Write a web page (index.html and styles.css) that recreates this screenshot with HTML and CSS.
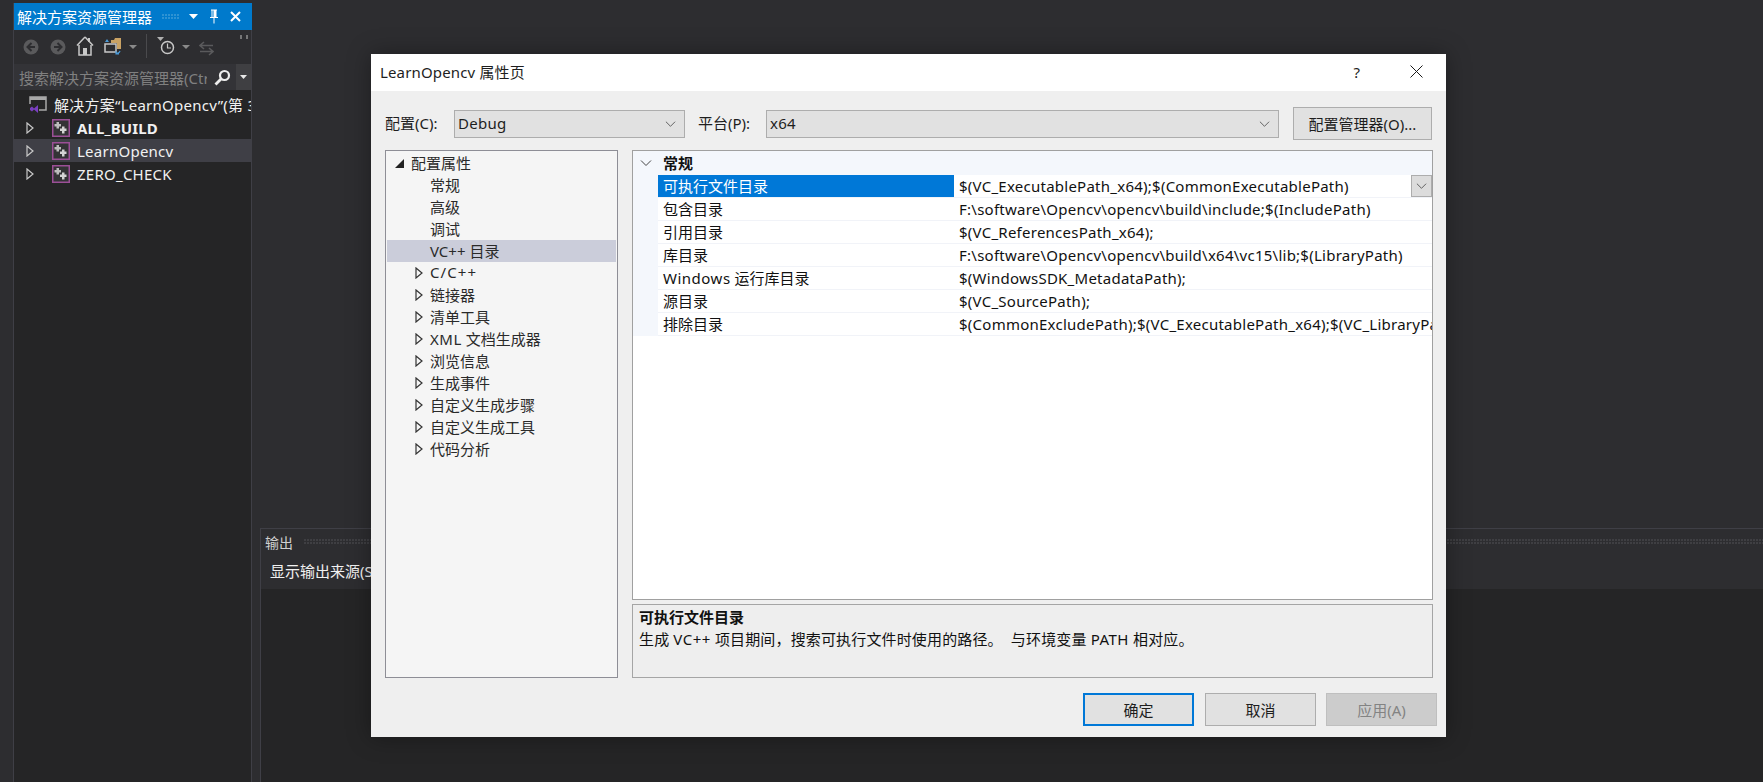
FILE: index.html
```html
<!DOCTYPE html>
<html lang="zh-CN">
<head>
<meta charset="utf-8">
<title>LearnOpencv 属性页</title>
<link rel="stylesheet" href="styles.css">
</head>
<body>
<svg class="defs" width="0" height="0">
  <defs>
    <symbol id="tri" viewBox="0 0 8 12"><path d="M1 1 L7 6 L1 11 Z" fill="none" stroke="currentColor" stroke-width="1.2"/></symbol>
    <symbol id="proj" viewBox="0 0 18 18">
      <rect x="0.75" y="0.75" width="16.5" height="16.5" fill="#333335" stroke="#9b4f96" stroke-width="1.5"/>
      <path d="M4.500 3h2.500v2h2v2.500H7v2H4.500v-2h-2V5h2z" fill="#bdbdbd"/>
      <path d="M10 7.500h2.500v2h2V12h-2v2.500H10V12H8V9.500h2z" fill="#d4d4d4"/>
    </symbol>
    <symbol id="chev" viewBox="0 0 12 8"><path d="M1 1.5 L6 6.5 L11 1.5" fill="none" stroke="currentColor" stroke-width="1"/></symbol>
  </defs>
</svg>
<div class="workspace">
  <aside class="side">
    <header class="side-title">
      <span class="side-title-text">解决方案资源管理器</span>
      <span class="grip grip-blue"></span>
      <svg class="tb-caret" width="9" height="5" viewBox="0 0 9 5"><path d="M0 0h9L4.500 5z" fill="#fff"/></svg>
      <svg class="tb-pin" width="10" height="15" viewBox="0 0 10 15"><path d="M2 0.500h6v1H7.500v6.500H9v1H5.500v5.500h-1V9H1V8h1.500V1.500H2z M3.500 1.500V8h1V1.500z" fill="#fff"/></svg>
      <svg class="tb-close" width="11" height="11" viewBox="0 0 11 11"><path d="M1 1L10 10M10 1L1 10" stroke="#fff" stroke-width="2"/></svg>
    </header>
    <div class="side-tools">
      <svg class="t-back" width="16" height="16" viewBox="0 0 16 16"><circle cx="8" cy="8" r="7.500" fill="#5a5a5c"/><path d="M8.500 4L4.500 8l4 4M5 8h7" fill="none" stroke="#2d2d30" stroke-width="2"/></svg>
      <svg class="t-fwd" width="16" height="16" viewBox="0 0 16 16"><circle cx="8" cy="8" r="7.500" fill="#5a5a5c"/><path d="M7.500 4l4 4-4 4M11 8H4" fill="none" stroke="#2d2d30" stroke-width="2"/></svg>
      <svg class="t-home" width="18" height="20" viewBox="0 0 18 20"><path d="M9 1L1 9.500M9 1l8 8.500" fill="none" stroke="#c8c8c8" stroke-width="1.500"/><path d="M3 9v10h12V9" fill="none" stroke="#c8c8c8" stroke-width="1.500"/><rect x="7" y="12" width="4" height="7" fill="#c8c8c8"/><rect x="12" y="2" width="2" height="4" fill="#c8c8c8"/></svg>
      <svg class="t-sync" width="18" height="18" viewBox="0 0 18 18"><path d="M7 3h3l1-2h6v11h-4V6H7z" fill="#c9a264"/><rect x="1" y="7" width="11" height="8" fill="none" stroke="#c8c8c8" stroke-width="1.500"/><path d="M1 5l2-3 2 3zM3 3h3" fill="#4a9ad8"/><path d="M12 16a3 3 0 0 0 4-2M12 14v3h3" fill="none" stroke="#4a9ad8" stroke-width="1.200"/></svg>
      <svg class="t-caret" width="8" height="4" viewBox="0 0 8 4"><path d="M0 0h8L4 4z" fill="#8a8a8a"/></svg>
      <span class="t-sep"></span>
      <svg class="t-hist" width="18" height="18" viewBox="0 0 18 18"><path d="M0 0h7L3.500 4z" fill="#b0b0b0"/><circle cx="10.500" cy="10.500" r="6" fill="none" stroke="#c8c8c8" stroke-width="1.500"/><path d="M10.500 6.500v4.500h3.500" fill="none" stroke="#c8c8c8" stroke-width="1.200"/></svg>
      <svg class="t-caret2" width="8" height="4" viewBox="0 0 8 4"><path d="M0 0h8L4 4z" fill="#8a8a8a"/></svg>
      <svg class="t-swap" width="15" height="15" viewBox="0 0 15 15"><path d="M5 1L1 4.500 5 8M1 4.500h13M10 7l4 3.500L10 14M14 10.500H1" fill="none" stroke="#5a5a5c" stroke-width="1.600"/></svg>
      <span class="t-more"></span>
    </div>
    <div class="side-search">
      <span class="search-text">搜索解决方案资源管理器(Ctrl+;)</span>
      <svg class="search-icon" width="17" height="17" viewBox="0 0 17 17"><circle cx="10.500" cy="6.500" r="4.500" fill="none" stroke="#eee" stroke-width="2.200"/><path d="M7 10L1.500 15.500" stroke="#eee" stroke-width="2.800"/></svg>
      <span class="search-drop"><svg width="7" height="4" viewBox="0 0 7 4"><path d="M0 0h7L3.500 4z" fill="#e8e8e8"/></svg></span>
    </div>
    <ul class="sol-tree">
      <li class="sol-row sol-root">
        <svg class="sol-icon" width="18" height="18" viewBox="0 0 18 18"><path d="M1 8V1h16v13h-7" fill="none" stroke="#a8a8a8" stroke-width="1.500"/><rect x="1" y="1" width="16" height="3" fill="#a8a8a8"/><path d="M1 12l2 -1.500 2 2 4-3.500v8l-4-3.500-2 2-2-1.500z" fill="#7a3fc0"/></svg>
        <span class="sol-label">解决方案“LearnOpencv”(第 3 个项目，共 3 个)</span>
      </li>
      <li class="sol-row"><svg class="sol-tri"><use href="#tri"/></svg><svg class="proj-icon"><use href="#proj"/></svg><span class="sol-label sol-bold">ALL_BUILD</span></li>
      <li class="sol-row sol-active"><svg class="sol-tri"><use href="#tri"/></svg><svg class="proj-icon"><use href="#proj"/></svg><span class="sol-label">LearnOpencv</span></li>
      <li class="sol-row"><svg class="sol-tri"><use href="#tri"/></svg><svg class="proj-icon"><use href="#proj"/></svg><span class="sol-label">ZERO_CHECK</span></li>
    </ul>
  </aside>
  <main class="main">
    <div class="editor"></div>
    <section class="output">
      <div class="out-title"><span>输出</span><span class="grip grip-dark"></span></div>
      <div class="out-tools">显示输出来源(S):</div>
      <div class="out-body"></div>
    </section>
  </main>
</div>

<div class="dialog">
  <header class="dlg-title">
    <span class="dlg-title-text">LearnOpencv 属性页</span>
    <span class="dlg-help">?</span>
    <svg class="dlg-close" width="13" height="13" viewBox="0 0 13 13"><path d="M0.500 0.500L12.500 12.500M12.500 0.500L0.500 12.500" stroke="#1a1a1a" stroke-width="1"/></svg>
  </header>
  <div class="dlg-body">
    <div class="cfg-row">
      <label class="cfg-label">配置(C):</label>
      <div class="combo combo-cfg"><span class="combo-text">Debug</span><svg class="chev"><use href="#chev"/></svg></div>
      <label class="cfg-label cfg-label2">平台(P):</label>
      <div class="combo combo-plat"><span class="combo-text">x64</span><svg class="chev"><use href="#chev"/></svg></div>
      <button class="btn btn-mgr">配置管理器(O)...</button>
    </div>
    <div class="panes">
      <nav class="tree">
        <div class="tree-row tree-root"><svg class="tree-open" width="9" height="9" viewBox="0 0 9 9"><path d="M9 0v9H0z" fill="#222"/></svg><span class="tree-text">配置属性</span></div>
        <div class="tree-row tree-child"><span class="tree-text">常规</span></div>
        <div class="tree-row tree-child"><span class="tree-text">高级</span></div>
        <div class="tree-row tree-child"><span class="tree-text">调试</span></div>
        <div class="tree-row tree-child tree-sel"><span class="tree-text">VC++ 目录</span></div>
        <div class="tree-row"><svg class="tree-tri"><use href="#tri"/></svg><span class="tree-text lat-wide">C/C++</span></div>
        <div class="tree-row"><svg class="tree-tri"><use href="#tri"/></svg><span class="tree-text">链接器</span></div>
        <div class="tree-row"><svg class="tree-tri"><use href="#tri"/></svg><span class="tree-text">清单工具</span></div>
        <div class="tree-row"><svg class="tree-tri"><use href="#tri"/></svg><span class="tree-text"><span class="lat">XML</span> 文档生成器</span></div>
        <div class="tree-row"><svg class="tree-tri"><use href="#tri"/></svg><span class="tree-text">浏览信息</span></div>
        <div class="tree-row"><svg class="tree-tri"><use href="#tri"/></svg><span class="tree-text">生成事件</span></div>
        <div class="tree-row"><svg class="tree-tri"><use href="#tri"/></svg><span class="tree-text">自定义生成步骤</span></div>
        <div class="tree-row"><svg class="tree-tri"><use href="#tri"/></svg><span class="tree-text">自定义生成工具</span></div>
        <div class="tree-row"><svg class="tree-tri"><use href="#tri"/></svg><span class="tree-text">代码分析</span></div>
      </nav>
      <div class="right">
        <div class="grid">
          <div class="grid-head"><svg class="head-chev"><use href="#chev"/></svg><span class="head-text">常规</span></div>
          <div class="grid-rows">
            <div class="prop prop-sel"><span class="prop-name">可执行文件目录</span><span class="prop-val">$(VC_ExecutablePath_x64);$(CommonExecutablePath)</span><span class="prop-drop"><svg class="chev"><use href="#chev"/></svg></span></div>
            <div class="prop"><span class="prop-name">包含目录</span><span class="prop-val">F:\software\Opencv\opencv\build\include;$(IncludePath)</span></div>
            <div class="prop"><span class="prop-name">引用目录</span><span class="prop-val">$(VC_ReferencesPath_x64);</span></div>
            <div class="prop"><span class="prop-name">库目录</span><span class="prop-val">F:\software\Opencv\opencv\build\x64\vc15\lib;$(LibraryPath)</span></div>
            <div class="prop"><span class="prop-name"><span class="lat">Windows</span> 运行库目录</span><span class="prop-val">$(WindowsSDK_MetadataPath);</span></div>
            <div class="prop"><span class="prop-name">源目录</span><span class="prop-val">$(VC_SourcePath);</span></div>
            <div class="prop"><span class="prop-name">排除目录</span><span class="prop-val">$(CommonExcludePath);$(VC_ExecutablePath_x64);$(VC_LibraryPath);$(VC_SourcePath)</span></div>
          </div>
        </div>
        <div class="desc">
          <div class="desc-title">可执行文件目录</div>
          <div class="desc-text">生成 <span class="lat">VC++</span> 项目期间，搜索可执行文件时使用的路径。&nbsp; 与环境变量 <span class="lat">PATH</span> 相对应。</div>
        </div>
      </div>
    </div>
    <div class="actions">
      <button class="btn btn-act btn-ok">确定</button>
      <button class="btn btn-act">取消</button>
      <button class="btn btn-act btn-off">应用(A)</button>
    </div>
  </div>
</div>
</body>
</html>
```
FILE: styles.css
```css
* { box-sizing: border-box; }
html, body { margin: 0; height: 100%; }
body {
  width: 1763px; height: 782px; overflow: hidden; position: relative;
  background: #2d2d30; color: #1e1e1e;
  font-family: "Noto Sans", "Noto Sans CJK SC", sans-serif; font-size: 15px;
}
.defs { position: absolute; }
.workspace { display: flex; height: 782px; padding: 3px 0 0 13px; }
.lat { letter-spacing: 0.5px; }
.lat-wide { letter-spacing: 1.1px; }

/* solution explorer */
.side { width: 239px; flex: none; display: flex; flex-direction: column; background: #252526; border-left: 1px solid #3f3f46; border-right: 1px solid #3f3f46; }
.side-title { height: 27px; flex: none; margin: 0 -1px 0 0; background: #007acc; color: #fff; display: flex; align-items: center; padding-left: 3px; line-height: 20px; position: relative; }
.side-title-text { width: 145px; white-space: nowrap; }
.grip { display: block; background-image: radial-gradient(circle at 1px 1px, currentColor 0.7px, transparent 0.9px); background-size: 3px 3px; }
.grip-blue { width: 17px; height: 6px; color: #2f94d4; }
.tb-caret { margin-left: 10px; }
.tb-pin { margin-left: 11px; }
.tb-close { margin-left: 11px; }
.side-tools { height: 34px; flex: none; background: #2d2d30; display: flex; align-items: center; position: relative; padding-left: 9px; }
.t-fwd { margin-left: 11px; }
.t-home { margin-left: 10px; margin-top: -3px; }
.t-sync { margin-left: 10px; margin-top: -3px; }
.t-caret { margin-left: 7px; }
.t-sep { width: 1px; height: 24px; background: #4a4a4d; margin-left: 9px; margin-top: -2px; }
.t-hist { margin-left: 10px; margin-top: -2px; }
.t-caret2 { margin-left: 7px; }
.t-swap { margin-left: 9px; margin-top: 2px; }
.t-more { position: absolute; right: 3px; top: 5px; width: 8px; height: 4px; background: linear-gradient(90deg, #777 0 2px, transparent 2px 6px, #777 6px 8px); }
.side-search { height: 26px; flex: none; background: #333337; display: flex; align-items: center; padding-left: 5px; position: relative; margin: 0; }
.search-text { width: 188px; overflow: hidden; white-space: nowrap; color: #808080; flex: none; }
.search-icon { margin-left: 7px; flex: none; }
.search-drop { position: absolute; right: 0; top: 0; bottom: 0; width: 15px; background: #3f3f42; display: flex; align-items: center; justify-content: center; }
.sol-tree { list-style: none; margin: 3px 0 0; padding: 0; color: #f1f1f1; }
.sol-row { height: 23px; display: flex; align-items: center; white-space: nowrap; overflow: hidden; padding-left: 12px; }
.sol-root { padding-left: 15px; }
.sol-active { background: #3f3f46; }
.sol-tri { width: 8px; height: 12px; color: #c8c8c8; flex: none; }
.proj-icon { width: 18px; height: 18px; margin-left: 18px; flex: none; }
.sol-icon { flex: none; }
.sol-label { margin-left: 7px; letter-spacing: 0.25px; }
.sol-bold { font-weight: 700; letter-spacing: 0.1px; }

/* main */
.main { flex: 1; min-width: 0; display: flex; flex-direction: column; padding-left: 8px; background: #2d2d30; }
.editor { height: 525px; flex: none; }
.output { flex: 1; display: flex; flex-direction: column; border-top: 1px solid #3f3f46; border-left: 1px solid #3f3f46; }
.out-title { height: 25px; flex: none; display: flex; align-items: center; gap: 11px; padding-left: 4px; color: #d0d0d0; font-size: 14px; }
.grip-dark { flex: 1; height: 6px; color: #3f3f43; }
.out-tools { height: 35px; flex: none; padding: 2px 0 0 9px; color: #f1f1f1; line-height: 30px; white-space: nowrap; }
.out-body { flex: 1; background: #252526; }

/* dialog */
.dialog { position: absolute; left: 371px; top: 54px; width: 1075px; height: 683px; background: #efefef; display: flex; flex-direction: column; box-shadow: 0 0 22px rgba(0,0,0,.35); }
.dlg-title { height: 37px; flex: none; background: #fff; display: flex; align-items: center; padding-left: 9px; }
.dlg-title-text { flex: 1; letter-spacing: 0.15px; margin-top: -2px; }
.dlg-help { margin-right: 50px; margin-top: -2px; }
.dlg-close { margin-right: 23px; margin-top: -2px; }
.dlg-body { flex: 1; display: flex; flex-direction: column; padding: 16px 9px 11px 14px; }
.cfg-row { display: flex; align-items: center; height: 33px; flex: none; padding-right: 5px; }
.cfg-label { width: 69px; flex: none; line-height: 20px; margin-top: -2px; }
.cfg-label2 { width: 68px; margin-left: 13px; }
.combo { height: 28px; background: #e1e1e1; border: 1px solid #adadad; display: flex; align-items: center; justify-content: space-between; padding: 0 8px 0 3px; flex: none; color: #1e1e1e; }
.combo-text { letter-spacing: 0.3px; margin-top: -2px; }
.combo-cfg { width: 231px; }
.combo-plat { width: 513px; }
.chev { width: 11px; height: 8px; color: #555; }
.btn { font: inherit; color: #1e1e1e; background: #e1e1e1; border: 1px solid #adadad; padding: 0; }
.btn-mgr { width: 139px; height: 33px; margin-left: 14px; white-space: nowrap; }
.panes { display: flex; margin-top: 10px; gap: 14px; height: 528px; flex: none; padding-right: 4px; }
.tree { width: 233px; flex: none; background: #f5f5f5; border: 1px solid #8e8e96; padding: 1px; }
.tree-row { height: 22px; display: flex; align-items: center; padding-left: 28px; white-space: nowrap; color: #2a2a2a; }
.tree-text { margin-top: -2px; }
.tree-child { padding-left: 43px; }
.tree-root { padding-left: 8px; }
.tree-sel { background: #cbcdda; }
.tree-open { margin-right: 7px; width: 9px; }
.tree-tri { width: 8px; height: 12px; margin-right: 7px; color: #333; flex: none; }
.right { flex: 1; min-width: 0; display: flex; flex-direction: column; gap: 4px; }
.grid { height: 450px; flex: none; background: #fff; border: 1px solid #a0a0a0; overflow: hidden; }
.grid-head { height: 24px; background: #f4f7fc; display: flex; align-items: center; font-weight: 700; color: #111; padding-left: 7px; }
.head-text { margin-top: -2px; }
.head-chev { width: 12px; height: 8px; margin-right: 11px; color: #444; }
.grid-rows { background: #f4f7fc; padding-left: 25px; }
.prop { height: 23px; display: flex; align-items: center; background: #fff; border-bottom: 1px solid #f1f3f8; position: relative; color: #111; white-space: nowrap; }
.prop-name { width: 296px; flex: none; height: 100%; padding-left: 5px; line-height: 22px; }
.prop-val { padding-left: 5px; flex: 1; min-width: 0; overflow: hidden; line-height: 22px; height: 100%; letter-spacing: 0.25px; }
.prop-sel .prop-name { background: #0078d7; color: #fff; height: 22px; }
.prop-drop { position: absolute; right: 0; top: 0; width: 21px; height: 22px; background: #dcdcdc; border: 1px solid #adadad; display: flex; align-items: center; justify-content: center; }
.desc { flex: 1; background: #eee; border: 1px solid #a5a5a5; padding: 1px 6px; color: #111; }
.desc-title { font-weight: 700; line-height: 22px; }
.desc-text { line-height: 22px; white-space: nowrap; letter-spacing: 0.15px; }
.actions { display: flex; justify-content: flex-end; gap: 11px; margin-top: 15px; }
.btn-act { width: 111px; height: 33px; }
.btn-ok { border: 2px solid #0078d7; }
.btn-off { background: #ccc; border-color: #bfbfbf; color: #838383; margin-left: -1px; }
```
